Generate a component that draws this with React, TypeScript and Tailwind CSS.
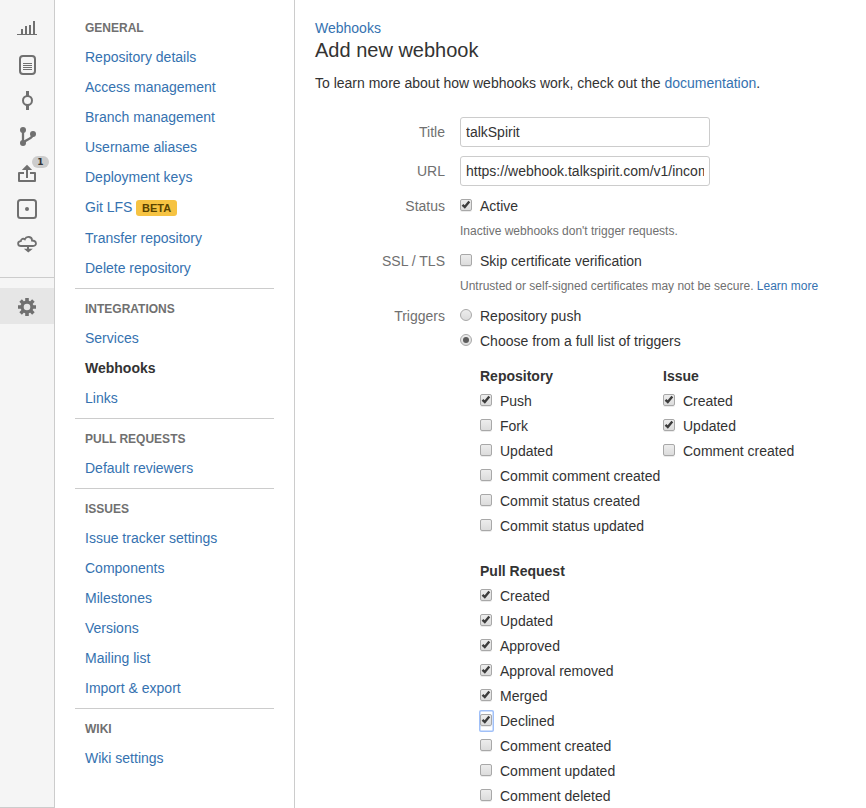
import React from "react";

type Kind = "checkbox" | "radio";

function Mark({ kind, checked, focused }: { kind: Kind; checked?: boolean; focused?: boolean }) {
  if (kind === "radio") {
    return (
      <span className="flex h-3 w-3 shrink-0 items-center justify-center rounded-full border border-[#a8a8a8] bg-linear-to-b from-[#ededed] to-[#dcdcdc]">
        {checked && <span className="h-1.5 w-1.5 rounded-full bg-[#5c5c5c]" />}
      </span>
    );
  }
  const box = (
    <span className="flex h-3 w-3 shrink-0 rounded-[2px] border border-[#a8a8a8] bg-linear-to-b from-[#ededed] to-[#dcdcdc] shadow-[0_1px_0_rgba(0,0,0,0.08)]">
      {checked && (
        <svg viewBox="0 0 10 10" className="h-2.5 w-2.5" fill="none" stroke="#3c3c3c" strokeWidth="2.4">
          <path d="M1.500 4.800 3.800 7 8.300 1.600" />
        </svg>
      )}
    </span>
  );
  if (!focused) return box;
  return (
    <span className="-mt-1 -mr-0.5 -mb-1.5 -ml-px flex h-[22px] w-[15px] shrink-0 items-start rounded-[2px] border-[#a0c0f8] pt-1 pl-px ring-[1.5px] ring-[#a0c0f8] ring-inset">
      {box}
    </span>
  );
}

function Option({ label, kind = "checkbox", checked, focused }: { label: string; kind?: Kind; checked?: boolean; focused?: boolean }) {
  return (
    <div className="flex h-[25px] items-center gap-2">
      <span className="-mt-px flex">
        <Mark kind={kind} checked={checked} focused={focused} />
      </span>
      <span className="whitespace-nowrap">{label}</span>
    </div>
  );
}

function Group({ title, items }: { title: string; items: [string, boolean, boolean?][] }) {
  return (
    <div>
      <div className="h-[25px] leading-[27px] font-bold">{title}</div>
      {items.map(([label, checked, focused]) => (
        <Option key={label} label={label} checked={checked} focused={focused} />
      ))}
    </div>
  );
}

function Row({ label, children }: { label: string; children: React.ReactNode }) {
  return (
    <div className="flex">
      <div className="w-[130px] shrink-0 text-right leading-[27px] text-[#707070]">{label}</div>
      <div className="pl-[15px]">{children}</div>
    </div>
  );
}

function Field({ label, value }: { label: string; value: string }) {
  return (
    <div className="mb-[9px] flex h-[30px] items-center">
      <div className="w-[130px] shrink-0 text-right text-[#707070]">{label}</div>
      <input
        defaultValue={value}
        className="ml-[15px] h-[30px] w-[250px] rounded-[3px] border border-[#ccc] bg-white px-[5px] text-sm text-[#333] outline-none"
      />
    </div>
  );
}

const sections: { title: string; links: string[] }[] = [
  {
    title: "GENERAL",
    links: ["Repository details", "Access management", "Branch management", "Username aliases", "Deployment keys", "Git LFS", "Transfer repository", "Delete repository"],
  },
  { title: "INTEGRATIONS", links: ["Services", "Webhooks", "Links"] },
  { title: "PULL REQUESTS", links: ["Default reviewers"] },
  { title: "ISSUES", links: ["Issue tracker settings", "Components", "Milestones", "Versions", "Mailing list", "Import & export"] },
  { title: "WIKI", links: ["Wiki settings"] },
];

function NavLink({ label }: { label: string }) {
  if (label === "Webhooks") return <a className="block h-[30px] leading-[30px] font-bold text-[#333]">{label}</a>;
  if (label === "Git LFS")
    return (
      <a className="flex h-[31px] items-start gap-[3.5px] text-[#3572b0]">
        <span className="leading-[30px]">{label}</span>
        <span className="mt-2 h-4 rounded-[3px] bg-[#f6c342] px-1.5 text-[11px] leading-[17px] font-bold text-[#594300]">BETA</span>
      </a>
    );
  return <a className="block h-[30px] leading-[30px] text-[#3572b0]">{label}</a>;
}

function Glyph({ children }: { children: React.ReactNode }) {
  return (
    <div className="flex h-9 items-center justify-center">
      <svg viewBox="0 0 20 20" className="h-5 w-5" fill="none" stroke="#707070" strokeWidth="2">
        {children}
      </svg>
    </div>
  );
}

function Rail() {
  return (
    <div className="h-full w-[55px] shrink-0 border-r border-b border-[#ccc] bg-[#f5f5f5] pt-[11px]">
      <Glyph>
        <path d="M5 10v5M9 7V15M13 6v9M17 2v13" />
        <path d="M0 15.500h20" strokeWidth="1" />
      </Glyph>
      <Glyph>
        <rect x="3" y="1" width="15" height="18" rx="3" />
        <path d="M6 8.500h9M6 10.500h9M6 12.500h9M6 14.500h9" strokeWidth="1" />
      </Glyph>
      <Glyph>
        <circle cx="10.500" cy="9.500" r="4.500" />
        <path d="M10.500 0V5M10.500 14v5" strokeWidth="3" />
      </Glyph>
      <Glyph>
        <path d="M6 3v13M16 7c0 5-5 4-9.500 8.500" strokeWidth="2.300" />
        <g fill="#707070" stroke="none">
          <circle cx="6" cy="3" r="3" />
          <circle cx="16" cy="7" r="3" />
          <circle cx="6" cy="16" r="3" />
        </g>
      </Glyph>
      <div className="relative">
        <Glyph>
          <path d="M7 10H2v8h16v-8h-5" strokeLinejoin="round" />
          <path d="M10 15V5" />
          <path d="M4.800 7 10 1.800 15.200 7z" fill="#707070" stroke="none" />
        </Glyph>
        <span className="absolute top-px left-8 flex h-3 w-[17px] items-center justify-center rounded-full bg-[#ccc] font-['DejaVu_Sans',sans-serif] text-[9px] font-bold text-[#333]">1</span>
      </div>
      <Glyph>
        <rect x="1" y="1" width="18" height="18" rx="2.500" />
        <circle cx="10" cy="10" r="2" fill="#707070" stroke="none" />
      </Glyph>
      <Glyph>
        <path d="M4 11C.3 11 .1 6.400 3.800 6.200 4 3.800 6.500 3.200 7.800 4.300 9.500.6 15.200 1.500 15 5.500 20 5.500 20.200 11 16 11z" strokeWidth="1.800" />
        <path d="M11 11v4" />
        <path d="M6.800 13.700h9L11.300 17.500z" fill="#707070" stroke="none" />
      </Glyph>
      <div className="mt-[14px] mb-[10px] h-px bg-[#ccc]" />
      <div className="h-9 bg-[#e6e6e6] pt-px">
        <Glyph>
          <circle cx="10" cy="10" r="4.900" strokeWidth="3.200" />
          <path d="M10 1v4M10 15v4M1 10h4M15 10h4M3.600 3.600l2.800 2.800M13.600 13.600l2.800 2.800M3.600 16.400l2.800-2.800M13.600 6.400l2.800-2.800" strokeWidth="3.600" />
        </Glyph>
      </div>
    </div>
  );
}

export default function App() {
  return (
    <div className="flex h-[808px] w-[866px] overflow-hidden bg-white font-['Liberation_Sans',Arial,sans-serif] text-sm text-[#333]">
      <Rail />
      <nav className="w-60 shrink-0 border-r border-[#ccc] px-5 pt-3">
        {sections.map((section, i) => (
          <div key={section.title} className={i ? "mt-[5px] border-t border-[#ccc] pt-1" : ""}>
            <div className="px-2.5">
              <h2 className="h-[30px] text-xs leading-8 font-bold text-[#707070]">{section.title}</h2>
              {section.links.map((link) => (
                <NavLink key={link} label={link} />
              ))}
            </div>
          </div>
        ))}
      </nav>
      <main className="min-w-0 flex-1 pt-[18px] pl-5">
        <a className="block h-5 leading-5 text-[#3572b0]">Webhooks</a>
        <h1 className="h-6 text-xl leading-6">Add new webhook</h1>
        <p className="mt-[11px] h-5 leading-5">
          To learn more about how webhooks work, check out the <a className="text-[#3572b0]">documentation</a>.
        </p>
        <div className="pt-6">
          <Field label="Title" value="talkSpirit" />
          <Field label="URL" value="https://webhook.talkspirit.com/v1/incoming/bitbucket" />
        </div>
        <div className="-mt-0.5">
          <Row label="Status">
            <Option label="Active" checked />
            <div className="mb-[5px] h-[25px] text-xs leading-[27px] text-[#707070]">Inactive webhooks don't trigger requests.</div>
          </Row>
          <Row label="SSL / TLS">
            <Option label="Skip certificate verification" />
            <div className="mb-[5px] h-[25px] text-xs leading-[27px] whitespace-nowrap text-[#707070]">
              Untrusted or self-signed certificates may not be secure. <a className="text-[#3572b0]">Learn more</a>
            </div>
          </Row>
          <Row label="Triggers">
            <Option kind="radio" label="Repository push" />
            <Option kind="radio" label="Choose from a full list of triggers" checked />
            <div className="mt-2.5 grid grid-cols-[183px_1fr] gap-y-5 pl-5">
              <Group
                title="Repository"
                items={[
                  ["Push", true],
                  ["Fork", false],
                  ["Updated", false],
                  ["Commit comment created", false],
                  ["Commit status created", false],
                  ["Commit status updated", false],
                ]}
              />
              <Group
                title="Issue"
                items={[
                  ["Created", true],
                  ["Updated", true],
                  ["Comment created", false],
                ]}
              />
              <Group
                title="Pull Request"
                items={[
                  ["Created", true],
                  ["Updated", true],
                  ["Approved", true],
                  ["Approval removed", true],
                  ["Merged", true],
                  ["Declined", true, true],
                  ["Comment created", false],
                  ["Comment updated", false],
                  ["Comment deleted", false],
                ]}
              />
            </div>
          </Row>
        </div>
      </main>
    </div>
  );
}
